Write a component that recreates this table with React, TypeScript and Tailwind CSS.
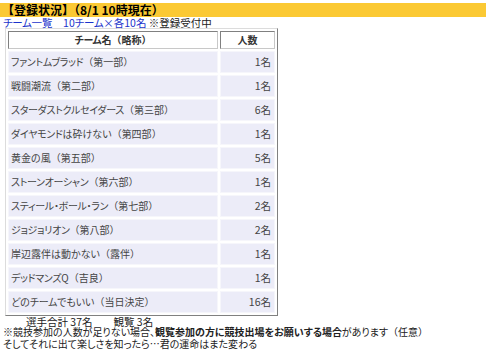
import React from "react";

const rows: [string, string][] = [
  ["ファントムブラッド（第一部）", "1名"],
  ["戦闘潮流（第二部）", "1名"],
  ["スターダストクルセイダース（第三部）", "6名"],
  ["ダイヤモンドは砕けない（第四部）", "1名"],
  ["黄金の風（第五部）", "5名"],
  ["ストーンオーシャン（第六部）", "1名"],
  ["スティール・ボール・ラン（第七部）", "2名"],
  ["ジョジョリオン（第八部）", "2名"],
  ["岸辺露伴は動かない（露伴）", "1名"],
  ["デッドマンズQ（吉良）", "1名"],
  ["どのチームでもいい（当日決定）", "16名"],
];

function T({ s }: { s: string }) {
  const parts = s.split(/([（）【】]|[ァ-ヶー・]+)/).filter((p) => p !== "");
  return (
    <>
      {parts.map((p, i) =>
        /^[（）【】]$/.test(p) ? (
          <span key={i} className="[font-feature-settings:normal]">
            {p}
          </span>
        ) : /^[ァ-ヶー・]+$/.test(p) ? (
          <span key={i} className="tracking-[-0.3px]">
            {p}
          </span>
        ) : (
          <span key={i}>{p}</span>
        )
      )}
    </>
  );
}

export default function App() {
  return (
    <div
      className="w-[490px] h-[352px] bg-white text-[10px] leading-[12px] text-[#222] [font-feature-settings:'palt']"
      style={{ fontFamily: '"Noto Sans CJK JP", sans-serif' }}
    >
      <div className="h-[3px]" />
      <div className="w-[486px] h-[14px] bg-[#fbc934] font-bold text-[12px] leading-[14px] text-black pl-[2px] [font-feature-settings:normal]">
        【登録状況】（8/1 10時現在）
      </div>
      <div className="h-[11px] pl-[3px] leading-[11px] whitespace-nowrap text-[10.5px]">
        <span className="text-[#1a33cc]">
          <T s="チーム一覧" />　10<T s="チーム" />×各10名
        </span>
        <span className="text-[#222]"> ※登録受付中</span>
      </div>
      <div className="pl-[5px]">
        <table className="border-separate border-spacing-[2px] w-[273px] table-fixed border border-t-[#dcdcdc] border-l-[#dcdcdc] border-r-[#808080] border-b-[#808080]">
          <thead>
            <tr>
              <th className="h-[18px] w-[210px] bg-white border border-t-[#808080] border-l-[#808080] border-r-[#c8c8c8] border-b-[#c8c8c8] font-bold text-[10px] leading-[14px] text-[#333] p-0 text-center">
                <T s="チーム名（略称）" />
              </th>
              <th className="h-[18px] bg-white border border-t-[#808080] border-l-[#808080] border-r-[#c8c8c8] border-b-[#c8c8c8] font-bold text-[10px] leading-[14px] text-[#333] p-0 text-center">
                人数
              </th>
            </tr>
          </thead>
          <tbody>
            {rows.map(([name, n]) => (
              <tr key={name}>
                <td className="h-[22px] bg-[#ececf8] border border-[#f6f6fb] text-[10px] leading-[14px] text-[#444] p-0 pl-[2px] whitespace-nowrap">
                  <T s={name} />
                </td>
                <td className="h-[22px] bg-[#ececf8] border border-[#f6f6fb] text-[10.5px] leading-[14px] text-[#444] p-0 pr-[3px] text-right">
                  {n}
                </td>
              </tr>
            ))}
          </tbody>
        </table>
      </div>
      <div className="flex flex-col whitespace-nowrap text-[10px]">
        <div className="h-[10px] leading-[12px] pl-[26px] text-[10.5px]">選手合計 37名　　観覧 3名</div>
        <div className="h-[12px] leading-[12px] pl-[3px]">
          ※競技参加の人数が足りない場合、<b>観覧参加の方に競技出場をお願いする場合</b>があります<T s="（任意）" />
        </div>
        <div className="h-[12px] leading-[12px] pl-[3px]">そしてそれに出て楽しさを知ったら…君の運命はまた変わる</div>
      </div>
    </div>
  );
}
